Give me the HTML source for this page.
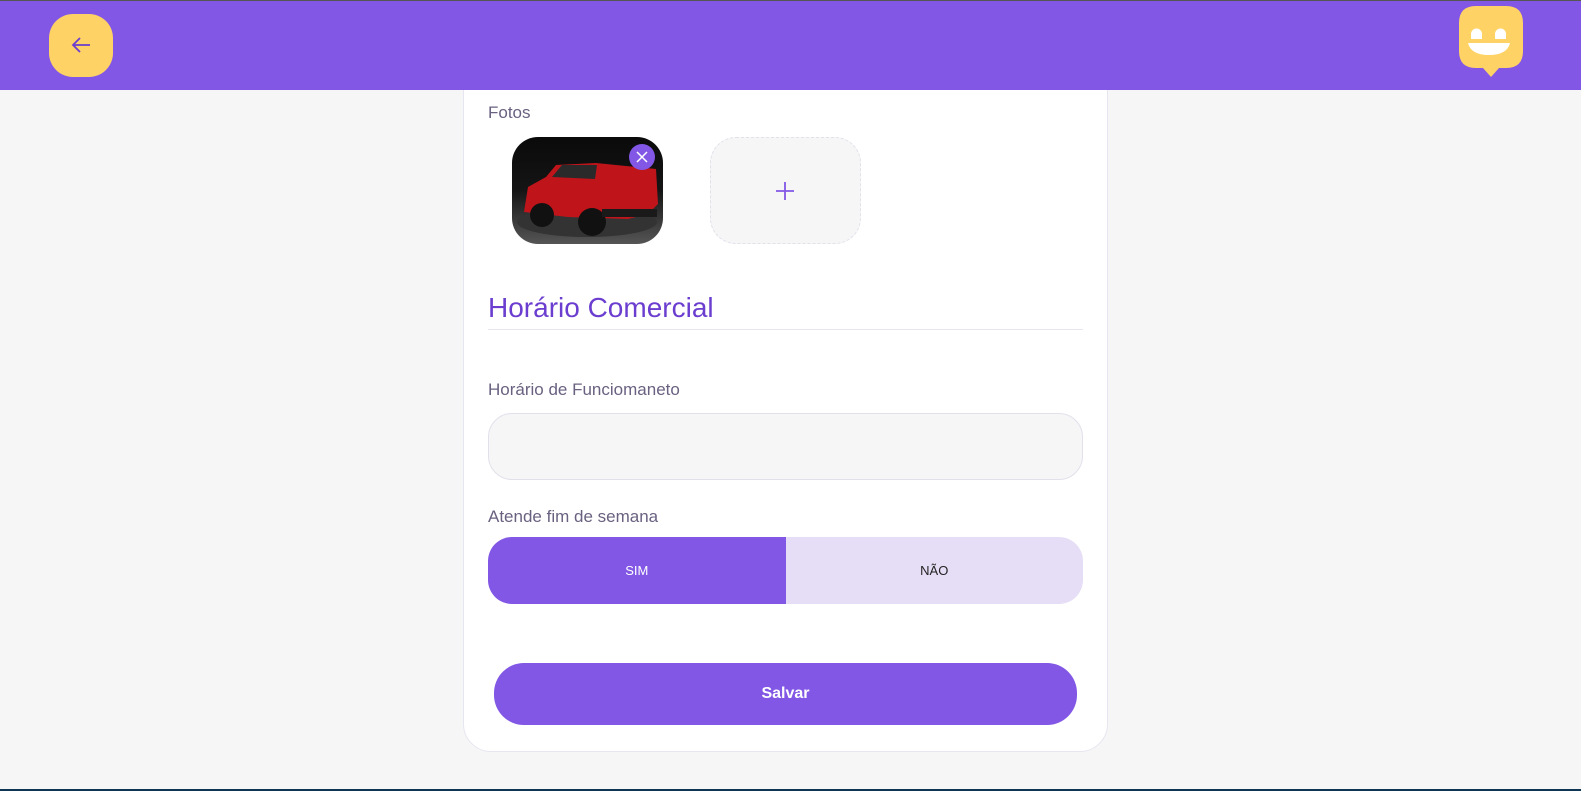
<!DOCTYPE html>
<html><head><meta charset="utf-8"><style>
*{box-sizing:border-box;margin:0;padding:0}
body{width:1581px;height:791px;background:#f6f6f7;font-family:"Liberation Sans",sans-serif;position:relative;overflow:hidden}
.top{position:absolute;left:0;top:0;width:1581px;height:1px;background:#555;z-index:5}
.bot{position:absolute;left:0;bottom:0;width:1581px;height:2px;background:#0f3555}
.hdr{position:absolute;left:0;top:1px;width:1581px;height:89px;background:#8257e5;z-index:3}
.back{position:absolute;left:49px;top:14px;width:64px;height:63px;border-radius:24px;background:#ffd266;z-index:4}
.card{position:absolute;left:463px;top:60px;width:645px;height:692px;background:#fff;border:1px solid #e6e6f0;border-radius:0 0 28px 28px}
.lbl{position:absolute;left:488px;color:#6a6180;font-size:17px}
.photo{position:absolute;left:512px;top:137px;width:151px;height:107px;border-radius:26px;overflow:hidden;background:linear-gradient(#0a0a0a 0%,#151515 50%,#555 100%)}
.add{position:absolute;left:710px;top:137px;width:151px;height:107px;border-radius:26px;background:#f6f6f7;border:1px dashed #e2e0ea}
h2{position:absolute;left:488px;top:292px;font-weight:normal;font-size:28px;color:#6b3ed0}
.line{position:absolute;left:488px;top:329px;width:595px;height:1px;background:#e6e6f0}
.inp{position:absolute;left:488px;top:413px;width:595px;height:67px;border-radius:24px;background:#f6f6f7;border:1px solid #e2e0ea}
.tog{position:absolute;left:488px;top:537px;width:595px;height:67px;border-radius:24px;overflow:hidden;display:flex;font-size:13px}
.tog div{flex:1;display:flex;align-items:center;justify-content:center}
.btn{position:absolute;left:494px;top:663px;width:583px;height:62px;border-radius:30px;background:#8257e5;color:#fff;font-weight:bold;font-size:16px;display:flex;align-items:center;justify-content:center}
</style></head><body>
<div class="card"></div>
<div class="hdr"></div><div class="top"></div>
<div class="back"><svg width="64" height="63" viewBox="0 0 64 63"><path d="M41 31H24M31 24l-7 7 7 7" fill="none" stroke="#6b3ed0" stroke-width="1.8"/></svg></div>
<svg style="position:absolute;left:1458px;top:6px;z-index:4" width="66" height="74" viewBox="0 0 66 74"><path d="M18 0h30q17 0 17 17v28q0 17-17 17h-7l-8 9-8-9h-7Q1 62 1 45V17Q1 0 18 0z" fill="#ffd266"/><path d="M13 33v-5a5.5 5.5 0 0 1 11 0v5z" fill="#fff"/><path d="M37 33v-5a5.5 5.5 0 0 1 11 0v5z" fill="#fff"/><path d="M10 37h42q-3 12-21 12T10 37z" fill="#fff"/></svg>
<div class="lbl" style="top:103px">Fotos</div>
<div class="photo"><svg width="151" height="107" viewBox="0 0 151 107"><ellipse cx="75" cy="85" rx="70" ry="15" fill="#333"/><path d="M12 75l4-25 18-10 10-12 40-2 60 6 2 35-10 10-20 5-60-2z" fill="#c0141b"/><path d="M40 40l10-12 35 0-2 14z" fill="#2a2a2a"/><circle cx="30" cy="78" r="12" fill="#111"/><circle cx="80" cy="85" r="14" fill="#111"/><rect x="90" y="72" width="55" height="8" fill="#1a1a1a"/><circle cx="130" cy="20" r="13" fill="#8257e5"/><path d="M125 15l10 10M135 15l-10 10" stroke="#fff" stroke-width="1.5"/></svg></div>
<div class="add"><svg width="149" height="105"><path d="M74 44v18M65 53h18" stroke="#8257e5" stroke-width="1.8"/></svg></div>
<h2>Horário Comercial</h2><div class="line"></div>
<div class="lbl" style="top:380px">Horário de Funciomaneto</div>
<div class="inp"></div>
<div class="lbl" style="top:507px">Atende fim de semana</div>
<div class="tog"><div style="background:#8257e5;color:#fff">SIM</div><div style="background:#e6def6;color:#222">NÃO</div></div>
<div class="btn">Salvar</div>
<div class="bot"></div>
</body></html>
